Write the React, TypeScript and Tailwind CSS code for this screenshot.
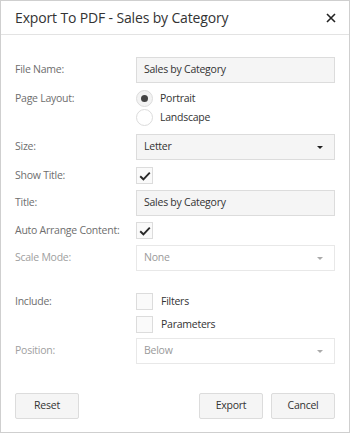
import { useState } from "react";

function Caret({ disabled }: { disabled?: boolean }) {
  return (
    <svg width="6" height="3" viewBox="0 0 6 3" className="shrink-0">
      <path d="M0 0h6L3 3z" fill={disabled ? "#aaaaaa" : "#222222"} />
    </svg>
  );
}

function Check() {
  return (
    <svg width="12" height="10" viewBox="0 0 12 10">
      <path d="M1.2 5.2l3.2 3.1L10.8 1.6" fill="none" stroke="#2a2a2a" strokeWidth="1.9" />
    </svg>
  );
}

function CheckBox({ checked, onClick }: { checked: boolean; onClick: () => void }) {
  return (
    <button
      onClick={onClick}
      className="w-[17px] h-[17px] border border-[#dcdcdc] bg-[#fafafa] flex items-center justify-center shrink-0"
    >
      {checked && <Check />}
    </button>
  );
}

function Select({ value, disabled }: { value: string; disabled?: boolean }) {
  return (
    <div
      className={`w-[199px] h-[26px] border flex items-center justify-between pl-[7px] pr-[11px] ${
        disabled ? "border-[#e8e8e8] bg-white text-[#9a9a9a]" : "border-[#dcdcdc] bg-[#f5f5f5] text-[#333]"
      }`}
    >
      <span>{value}</span>
      <Caret disabled={disabled} />
    </div>
  );
}

function Label({ text, disabled }: { text: string; disabled?: boolean }) {
  return (
    <div className={`w-[121px] h-[17px] flex items-center shrink-0 ${disabled ? "text-[#a0a0a0]" : "text-[#6e6e6e]"}`}>
      {text}
    </div>
  );
}

function App() {
  const [layout, setLayout] = useState("portrait");
  const [showTitle, setShowTitle] = useState(true);
  const [autoArrange, setAutoArrange] = useState(true);
  const [filters, setFilters] = useState(false);
  const [params, setParams] = useState(false);

  return (
    <div className="w-[350px] h-[433px] bg-white border border-[#cfcfcf] flex flex-col text-[10.5px] tracking-[-0.25px] font-['Open_Sans',sans-serif] text-[#333]">
      <div className="h-[34px] border-b border-[#e3e3e3] flex items-center justify-between pl-[14px] pr-[13px] shrink-0">
        <span className="text-[14px] tracking-[-0.15px] text-[#333]">Export To PDF - Sales by Category</span>
        <svg width="10" height="10" viewBox="0 0 10 10">
          <path d="M1 1l8 8M9 1l-8 8" stroke="#222" strokeWidth="1.6" />
        </svg>
      </div>

      <div className="flex flex-col px-[14px]">
        <div className="flex items-center mt-[22px]">
          <Label text="File Name:" />
          <div className="w-[199px] h-[26px] border border-[#dcdcdc] bg-[#f5f5f5] flex items-center pl-[7px]">
            Sales by Category
          </div>
        </div>

        <div className="flex mt-[7px]">
          <Label text="Page Layout:" />
          <div className="flex flex-col gap-[2px]">
            {[
              ["portrait", "Portrait"],
              ["landscape", "Landscape"],
            ].map(([k, t]) => (
              <button key={k} onClick={() => setLayout(k)} className="flex items-center gap-[7px] h-[17px]">
                <span
                  className={`w-[17px] h-[17px] rounded-full border border-[#dcdcdc] flex items-center justify-center ${
                    layout === k ? "bg-[#f3f3f3]" : "bg-white"
                  }`}
                >
                  {layout === k && <span className="w-[7px] h-[7px] rounded-full bg-[#444]" />}
                </span>
                <span>{t}</span>
              </button>
            ))}
          </div>
        </div>

        <div className="flex items-center mt-[8px]">
          <Label text="Size:" />
          <Select value="Letter" />
        </div>

        <div className="flex items-center mt-[7px]">
          <Label text="Show Title:" />
          <CheckBox checked={showTitle} onClick={() => setShowTitle(!showTitle)} />
        </div>

        <div className="flex items-center mt-[6px]">
          <Label text="Title:" />
          <div className="w-[199px] h-[26px] border border-[#dcdcdc] bg-[#f5f5f5] flex items-center pl-[7px]">
            Sales by Category
          </div>
        </div>

        <div className="flex items-center mt-[6px]">
          <Label text="Auto Arrange Content:" />
          <CheckBox checked={autoArrange} onClick={() => setAutoArrange(!autoArrange)} />
        </div>

        <div className="flex items-center mt-[6px]">
          <Label text="Scale Mode:" disabled />
          <Select value="None" disabled />
        </div>

        <div className="flex mt-[22px]">
          <Label text="Include:" />
          <div className="flex flex-col gap-[6px]">
            <div className="flex items-center gap-[8px]">
              <CheckBox checked={filters} onClick={() => setFilters(!filters)} />
              <span>Filters</span>
            </div>
            <div className="flex items-center gap-[8px]">
              <CheckBox checked={params} onClick={() => setParams(!params)} />
              <span>Parameters</span>
            </div>
          </div>
        </div>

        <div className="flex items-center mt-[5px]">
          <Label text="Position:" disabled />
          <Select value="Below" disabled />
        </div>

        <div className="flex items-center justify-between mt-[29px]">
          <button className="w-[64px] h-[26px] border border-[#dcdcdc] bg-[#f5f5f5] rounded-[2px]">Reset</button>
          <div className="flex gap-[8px]">
            <button className="w-[64px] h-[26px] border border-[#dcdcdc] bg-[#f5f5f5] rounded-[2px]">Export</button>
            <button className="w-[64px] h-[26px] border border-[#dcdcdc] bg-[#f5f5f5] rounded-[2px]">Cancel</button>
          </div>
        </div>
      </div>
    </div>
  );
}

export default App;
